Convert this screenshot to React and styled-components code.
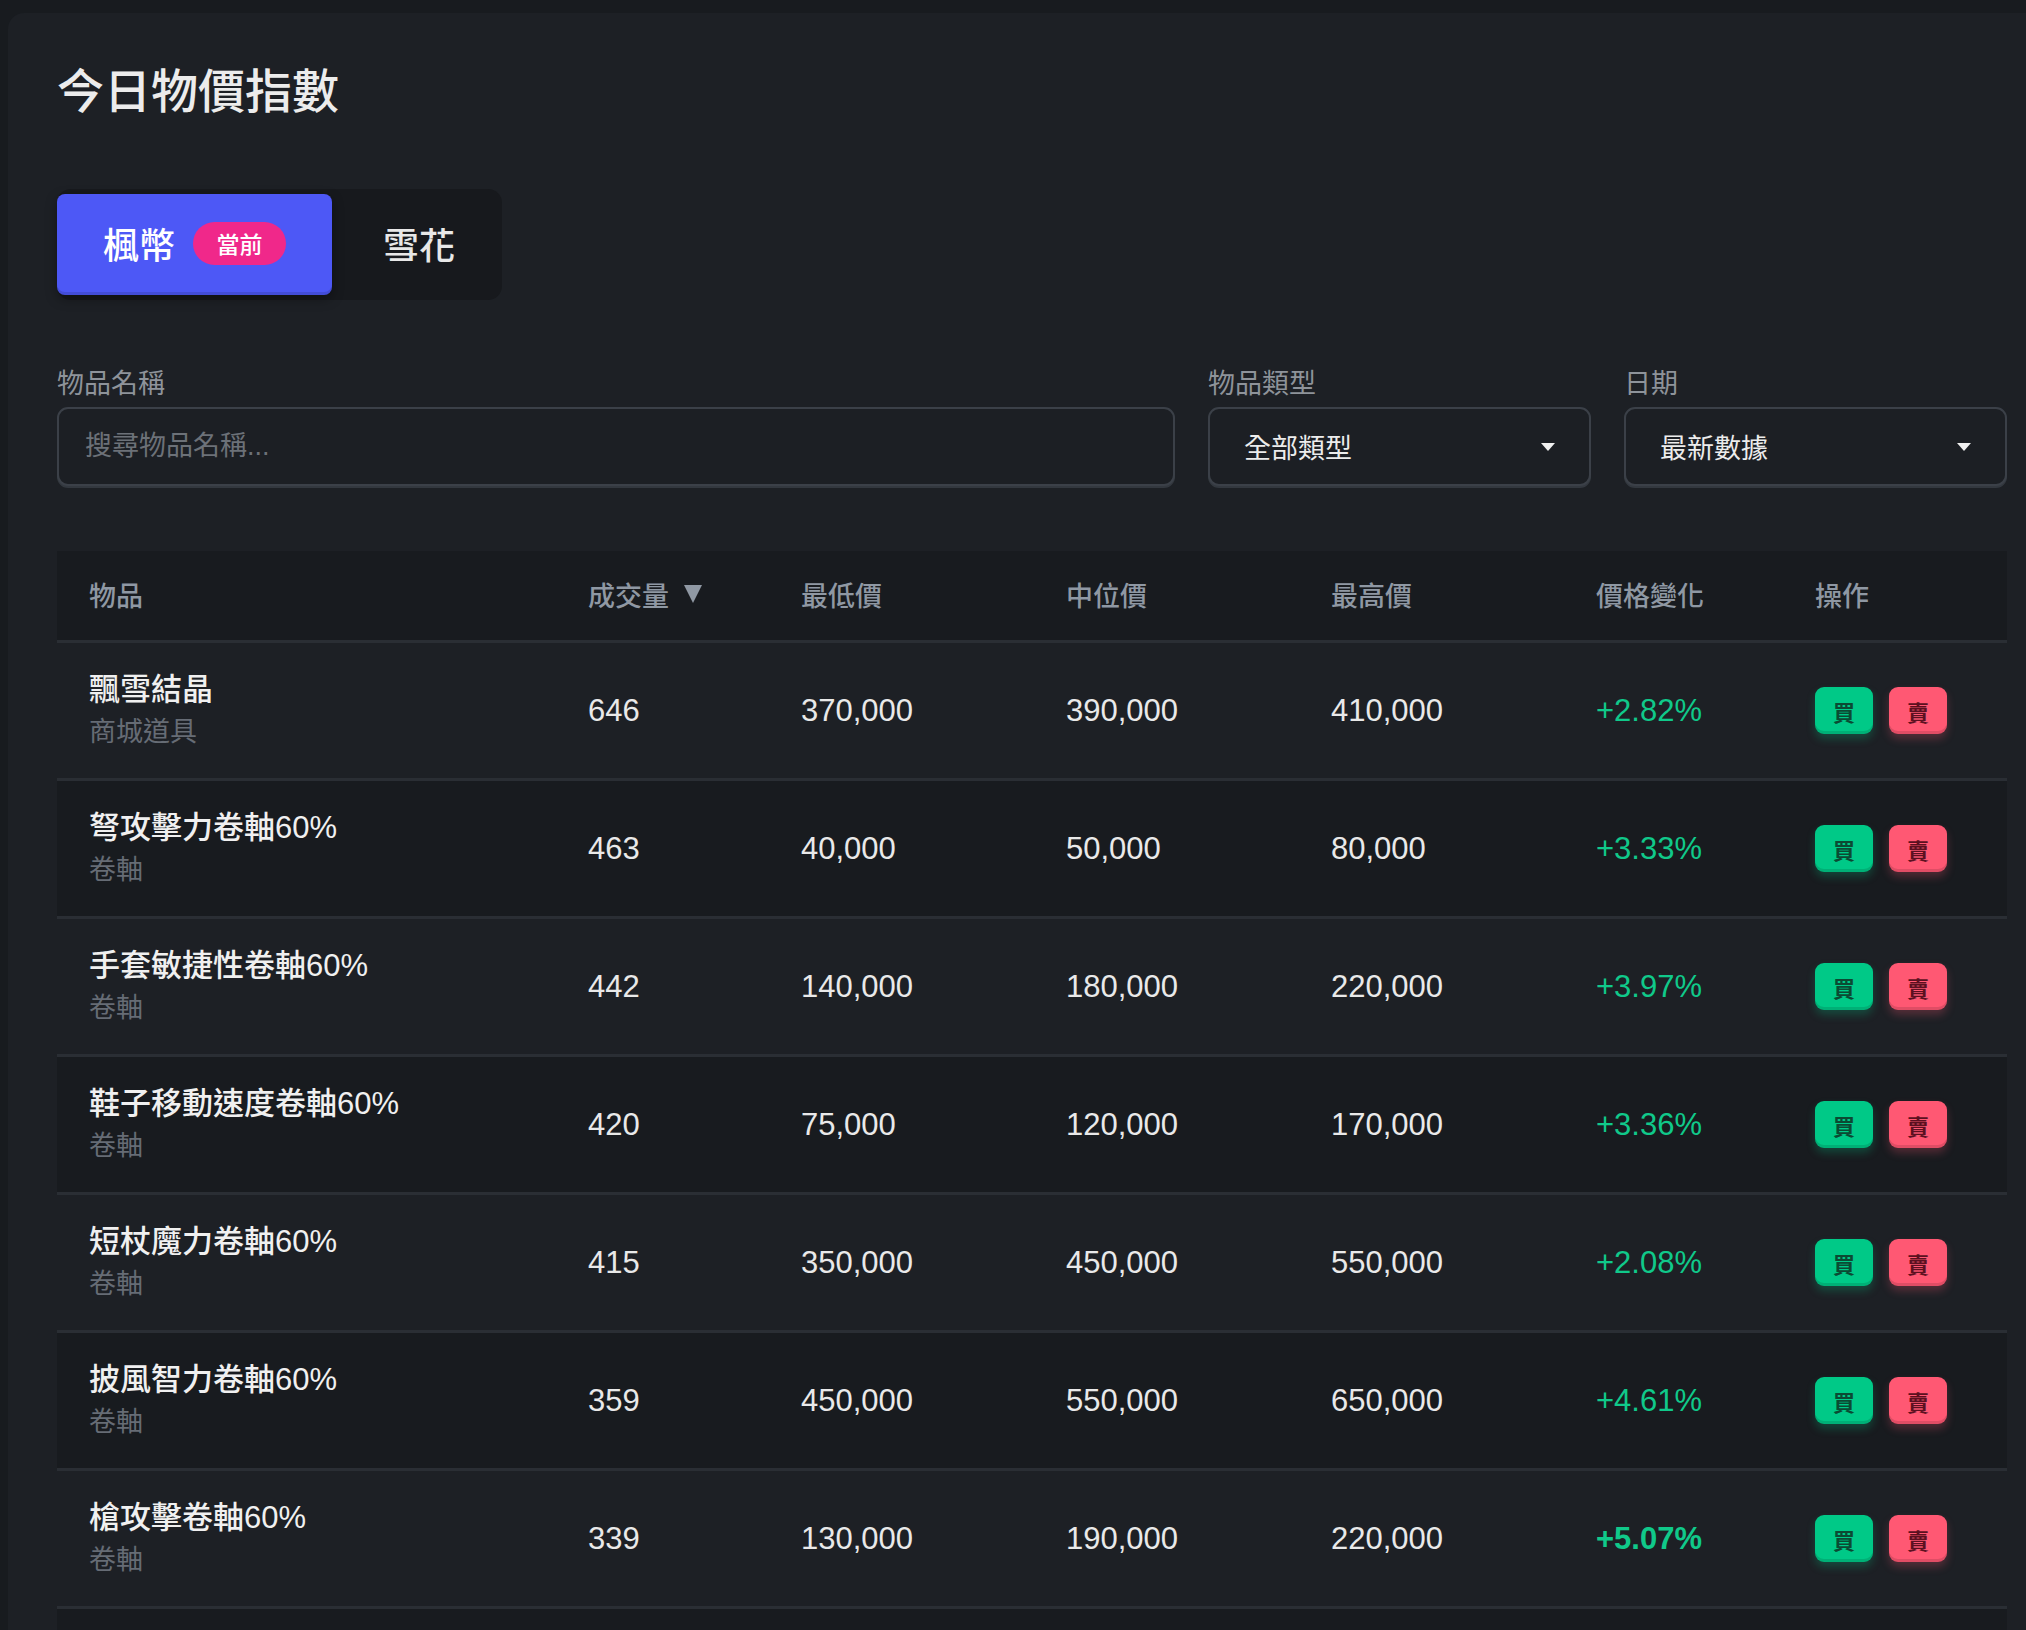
import React, { useState } from 'react';
import styled, { createGlobalStyle } from 'styled-components';

const GlobalStyle = createGlobalStyle`
  html, body {
    margin: 0;
    padding: 0;
    background: #181b1f;
    overflow: hidden;
  }
  body {
    font-family: "Liberation Sans", "Noto Sans CJK TC", sans-serif;
    color: #ebebeb;
  }
`;

const Page = styled.div`
  padding: 13px 0 0 8px;
`;

const Card = styled.div`
  background: #1d2025;
  border-radius: 16px 0 0 0;
  padding: 50px 19px 0 49px;
  min-height: 1700px;
`;

const Title = styled.h1`
  margin: 0;
  font-size: 47px;
  line-height: 58px;
  font-weight: 500;
  color: #ececec;
`;

const Tabs = styled.div`
  display: inline-flex;
  margin-top: 68px;
  padding: 5px 5px 5px 0;
  background: #17191d;
  border-radius: 14px;
`;

const Tab = styled.button`
  display: flex;
  align-items: center;
  gap: 18px;
  height: 101px;
  padding: ${(p) => (p.active ? '0 46px 3px' : '0 42px 3px 51px')};
  border: none;
  border-radius: 8px;
  font-family: inherit;
  font-size: 36px;
  font-weight: 500;
  color: ${(p) => (p.active ? '#ffffff' : '#e8e8e8')};
  background: ${(p) => (p.active ? '#4d58f6' : 'transparent')};
  box-shadow: ${(p) => (p.active ? '0 4px 12px rgba(0,0,0,0.35), inset 0 -3px 0 rgba(0,0,0,0.12)' : 'none')};
  cursor: pointer;
`;

const Badge = styled.span`
  display: inline-flex;
  align-items: center;
  justify-content: center;
  width: 93px;
  height: 43px;
  border-radius: 22px;
  background: #f0288a;
  color: #fff;
  font-size: 23px;
  font-weight: 500;
`;

const Filters = styled.div`
  display: grid;
  grid-template-columns: 1fr 383px 383px;
  gap: 33px;
  margin-top: 63px;
`;

const Field = styled.label`
  display: flex;
  flex-direction: column;
  gap: 2px;
`;

const Label = styled.span`
  font-size: 27px;
  line-height: 42px;
  color: #8e939a;
`;

const inputBase = `
  box-sizing: border-box;
  height: 79px;
  border: 2px solid #3b4048;
  border-radius: 11px;
  background: #1c1f24;
  box-shadow: 0 2px 0 #33383f;
  font-family: "Liberation Sans", "Noto Sans CJK TC", sans-serif;
  font-size: 27px;
`;

const SearchInput = styled.input`
  ${inputBase}
  padding: 0 26px;
  color: #e8e8e8;
  outline: none;
  &::placeholder {
    color: #6c7178;
  }
`;

const Select = styled.div`
  ${inputBase}
  display: flex;
  align-items: center;
  justify-content: space-between;
  padding: 0 34px 0 34px;
  color: #ececec;
`;

const Caret = styled.span`
  width: 0;
  height: 0;
  border-left: 7px solid transparent;
  border-right: 7px solid transparent;
  border-top: 8px solid #f0f0f0;
`;

const Table = styled.div`
  margin-top: 65px;
`;

const cols = '499px 213px 265px 265px 265px 219px 1fr';

const HeadRow = styled.div`
  display: grid;
  grid-template-columns: ${cols};
  align-items: center;
  height: 86px;
  padding-bottom: 3px;
  background: #181b1f;
  border-bottom: 3px solid #2a2e34;
`;

const HeadCell = styled.div`
  padding-left: 32px;
  font-size: 27px;
  font-weight: 500;
  color: #8f98a3;
  display: flex;
  align-items: center;
  gap: 15px;
`;

const SortMark = styled.span`
  width: 0;
  height: 0;
  border-left: 9px solid transparent;
  border-right: 9px solid transparent;
  border-top: 18px solid #8f98a3;
`;

const Row = styled.div`
  display: grid;
  grid-template-columns: ${cols};
  align-items: center;
  height: 135px;
  background: ${(p) => (p.odd ? '#1d2025' : '#181b1f')};
  border-bottom: 3px solid #2a2e34;
`;

const Cell = styled.div`
  padding-left: 32px;
  font-size: 31px;
  color: #e9e9e9;
`;

const ItemName = styled.div`
  font-size: 31px;
  line-height: 42px;
  font-weight: 500;
  color: #f0f0f0;
`;

const ItemType = styled.div`
  font-size: 27px;
  line-height: 42px;
  color: #666c75;
`;

const Change = styled(Cell)`
  color: #10c98a;
  font-weight: ${(p) => (p.strong ? 700 : 400)};
`;

const Actions = styled.div`
  padding-left: 32px;
  display: flex;
  gap: 16px;
`;

const TradeButton = styled.button`
  width: 58px;
  height: 47px;
  padding: 0;
  border: none;
  border-radius: 9px;
  font-family: inherit;
  font-size: 22px;
  font-weight: 700;
  color: ${(p) => (p.sell ? '#5c1020' : '#0b4a33')};
  background: ${(p) => (p.sell ? '#ff5873' : '#00c987')};
  box-shadow: ${(p) => (p.sell
    ? 'inset 0 -3px 0 rgba(0,0,0,0.12), 0 5px 8px rgba(255,88,115,0.25)'
    : 'inset 0 -3px 0 rgba(0,0,0,0.12), 0 5px 8px rgba(0,201,135,0.25)')};
  cursor: pointer;
`;

const RestRows = styled.div`
  height: 120px;
  background: #181b1f;
`;

const items = [
  { name: '飄雪結晶', type: '商城道具', vol: 646, low: '370,000', mid: '390,000', high: '410,000', change: '+2.82%' },
  { name: '弩攻擊力卷軸60%', type: '卷軸', vol: 463, low: '40,000', mid: '50,000', high: '80,000', change: '+3.33%' },
  { name: '手套敏捷性卷軸60%', type: '卷軸', vol: 442, low: '140,000', mid: '180,000', high: '220,000', change: '+3.97%' },
  { name: '鞋子移動速度卷軸60%', type: '卷軸', vol: 420, low: '75,000', mid: '120,000', high: '170,000', change: '+3.36%' },
  { name: '短杖魔力卷軸60%', type: '卷軸', vol: 415, low: '350,000', mid: '450,000', high: '550,000', change: '+2.08%' },
  { name: '披風智力卷軸60%', type: '卷軸', vol: 359, low: '450,000', mid: '550,000', high: '650,000', change: '+4.61%' },
  { name: '槍攻擊卷軸60%', type: '卷軸', vol: 339, low: '130,000', mid: '190,000', high: '220,000', change: '+5.07%', strong: true },
];

function App() {
  const [tab, setTab] = useState('maple');
  return (
    <Page>
      <GlobalStyle />
      <Card>
        <Title>今日物價指數</Title>
        <Tabs>
          <Tab active={tab === 'maple'} onClick={() => setTab('maple')}>
            楓幣
            {tab === 'maple' && <Badge>當前</Badge>}
          </Tab>
          <Tab active={tab === 'snow'} onClick={() => setTab('snow')}>
            雪花
            {tab === 'snow' && <Badge>當前</Badge>}
          </Tab>
        </Tabs>

        <Filters>
          <Field>
            <Label>物品名稱</Label>
            <SearchInput placeholder="搜尋物品名稱..." />
          </Field>
          <Field>
            <Label>物品類型</Label>
            <Select>
              全部類型
              <Caret />
            </Select>
          </Field>
          <Field>
            <Label>日期</Label>
            <Select>
              最新數據
              <Caret />
            </Select>
          </Field>
        </Filters>

        <Table>
          <HeadRow>
            <HeadCell>物品</HeadCell>
            <HeadCell>
              成交量
              <SortMark />
            </HeadCell>
            <HeadCell>最低價</HeadCell>
            <HeadCell>中位價</HeadCell>
            <HeadCell>最高價</HeadCell>
            <HeadCell>價格變化</HeadCell>
            <HeadCell>操作</HeadCell>
          </HeadRow>
          {items.map((item, i) => (
            <Row key={item.name} odd={i % 2 === 0}>
              <Cell>
                <ItemName>{item.name}</ItemName>
                <ItemType>{item.type}</ItemType>
              </Cell>
              <Cell>{item.vol}</Cell>
              <Cell>{item.low}</Cell>
              <Cell>{item.mid}</Cell>
              <Cell>{item.high}</Cell>
              <Change strong={item.strong}>{item.change}</Change>
              <Actions>
                <TradeButton>買</TradeButton>
                <TradeButton sell>賣</TradeButton>
              </Actions>
            </Row>
          ))}
          <RestRows />
        </Table>
      </Card>
    </Page>
  );
}

export default App;
